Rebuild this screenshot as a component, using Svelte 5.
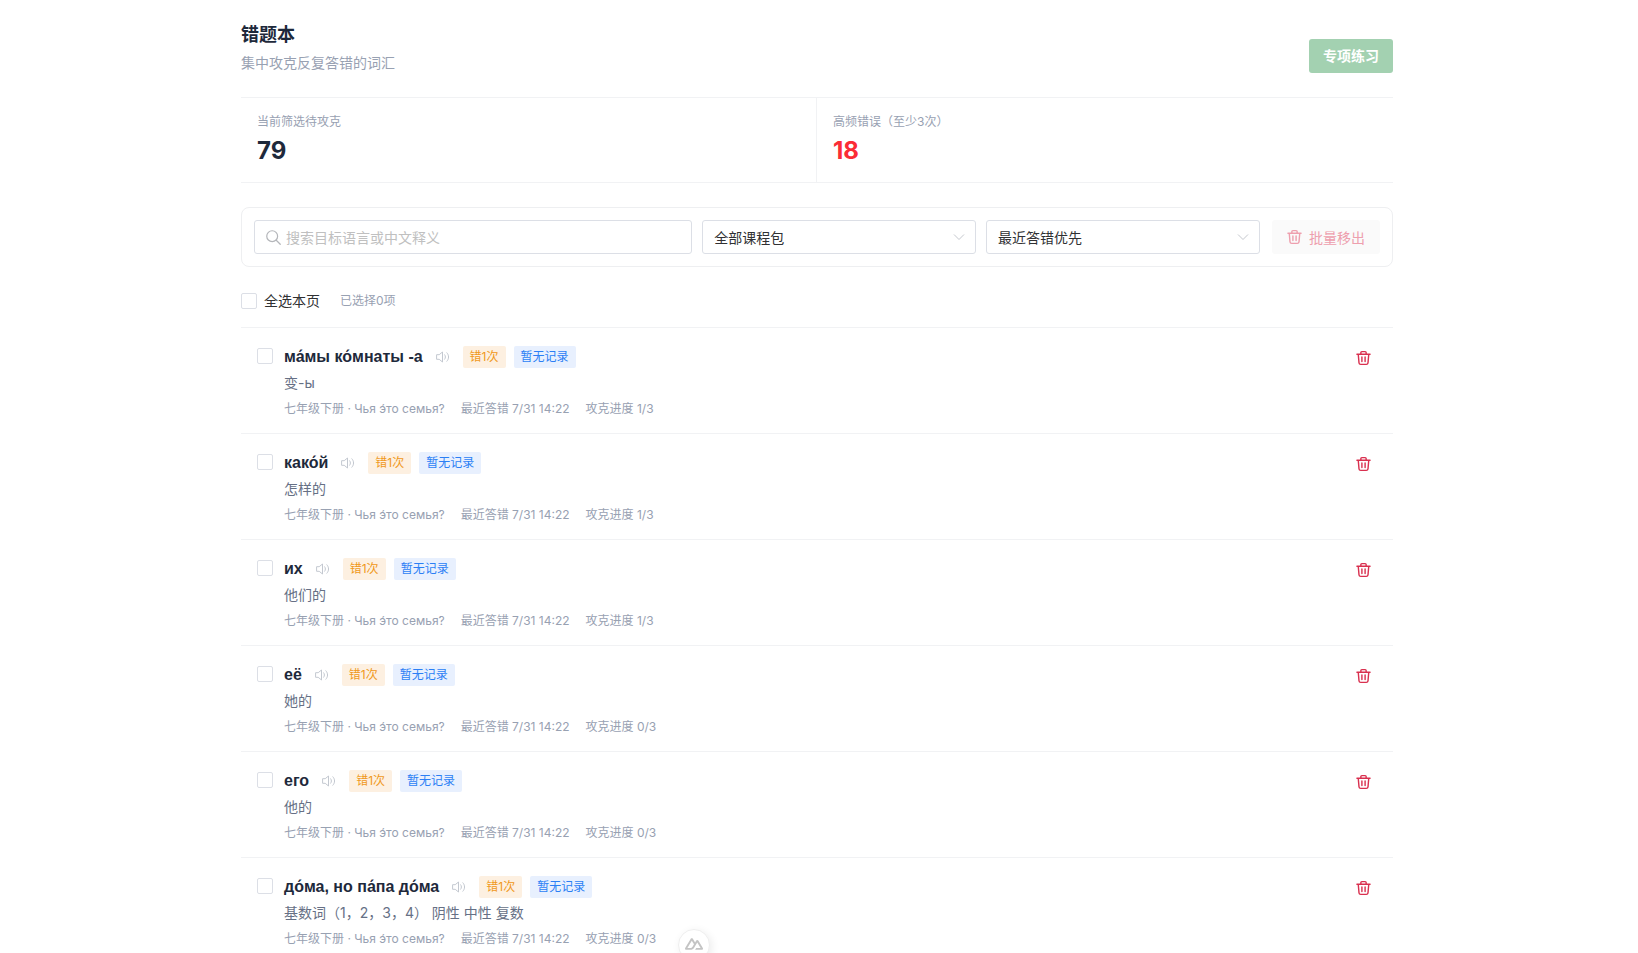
<script lang="ts">
  interface WrongWord {
    id: number;
    word: string;
    meaning: string;
    progress: number;
  }

  const words: WrongWord[] = [
    { id: 1, word: 'ма́мы ко́мнаты -а', meaning: '变-ы', progress: 1 },
    { id: 2, word: 'како́й', meaning: '怎样的', progress: 1 },
    { id: 3, word: 'их', meaning: '他们的', progress: 1 },
    { id: 4, word: 'её', meaning: '她的', progress: 0 },
    { id: 5, word: 'его', meaning: '他的', progress: 0 },
    { id: 6, word: 'до́ма, но па́па до́ма', meaning: '基数词（1，2，3，4） 阴性 中性 复数', progress: 0 }
  ];

  let keyword = $state('');
  let course = $state('all');
  let sort = $state('recent');
  let selected = $state<number[]>([]);

  let allSelected = $derived(selected.length === words.length);

  function toggleAll() {
    selected = allSelected ? [] : words.map((w) => w.id);
  }
</script>

{#snippet trash()}
  <svg class="trash" viewBox="0 0 16 16" fill="none" stroke="currentColor" stroke-width="1.5" stroke-linecap="round" stroke-linejoin="round" aria-hidden="true">
    <path d="M1 4h14M5.2 4V2.2c0-.6.4-1 1-1h3.600c.6 0 1 .4 1 1V4M2.400 4l.8 9.200c.1 1 .8 1.600 1.800 1.600h6c1 0 1.700-.6 1.800-1.600L13.600 4M6.300 7v4.800M9.700 7v4.800" />
  </svg>
{/snippet}

<div class="page">
  <main>
    <header>
      <div>
        <h1>错题本</h1>
        <p>集中攻克反复答错的词汇</p>
      </div>
      <button class="practice" disabled={selected.length === 0}>专项练习</button>
    </header>

    <section class="stats">
      <div class="stat">
        <span>当前筛选待攻克</span>
        <strong>79</strong>
      </div>
      <div class="stat">
        <span>高频错误（至少3次）</span>
        <strong class="danger">18</strong>
      </div>
    </section>

    <section class="filters">
      <label class="search">
        <svg viewBox="0 0 16 16" fill="none" stroke="currentColor" stroke-width="1.3" stroke-linecap="round" aria-hidden="true">
          <circle cx="6.6" cy="6.600" r="5.800" />
          <path d="M10.900 10.900l4.300 4.300" />
        </svg>
        <input type="text" bind:value={keyword} placeholder="搜索目标语言或中文释义" aria-label="搜索" />
      </label>
      <div class="select">
        <select bind:value={course} aria-label="课程包">
          <option value="all">全部课程包</option>
        </select>
        <svg viewBox="0 0 12 12" fill="none" stroke="currentColor" aria-hidden="true"><path d="M1 3.5l5 5 5-5" /></svg>
      </div>
      <div class="select">
        <select bind:value={sort} aria-label="排序">
          <option value="recent">最近答错优先</option>
        </select>
        <svg viewBox="0 0 12 12" fill="none" stroke="currentColor" aria-hidden="true"><path d="M1 3.5l5 5 5-5" /></svg>
      </div>
      <button class="remove" disabled={selected.length === 0}>
        {@render trash()}
        批量移出
      </button>
    </section>

    <div class="toolbar">
      <label>
        <input type="checkbox" checked={allSelected} onchange={toggleAll} />
        全选本页
      </label>
      <span>已选择{selected.length}项</span>
    </div>

    <ul>
      {#each words as item (item.id)}
        <li>
          <input type="checkbox" value={item.id} bind:group={selected} aria-label={item.word} />
          <div class="body">
            <div class="head">
              <h2>{item.word}</h2>
              <button class="sound" aria-label="播放发音">
                <svg viewBox="0 0 14 14" fill="none" stroke="currentColor" stroke-linecap="round" stroke-linejoin="round" aria-hidden="true">
                  <path d="M1 4.7h2.2L6.5 2v10L3.2 9.3H1zM8.7 4.8c1 1.3 1 3.1 0 4.4M10.9 2.8c2.3 2.4 2.3 6 0 8.4" />
                </svg>
              </button>
              <span class="tag warning">错1次</span>
              <span class="tag info">暂无记录</span>
            </div>
            <p class="meaning">{item.meaning}</p>
            <div class="meta">
              <span>七年级下册 · Чья э́то семья́?</span>
              <span>最近答错 7/31 14:22</span>
              <span>攻克进度 {item.progress}/3</span>
            </div>
          </div>
          <button class="delete" aria-label="移出">{@render trash()}</button>
        </li>
      {/each}
    </ul>
  </main>

  <button class="devtools" aria-label="Nuxt DevTools">
    <svg viewBox="0 4 24 16" fill="currentColor" aria-hidden="true">
      <path d="M13.464 19.83h8.922c.283 0 .562-.073.807-.21a1.6 1.6 0 0 0 .591-.574 1.53 1.53 0 0 0 .216-.783 1.53 1.53 0 0 0-.217-.782L17.792 7.414a1.6 1.6 0 0 0-.591-.573 1.65 1.65 0 0 0-.807-.21c-.283 0-.562.073-.807.21a1.6 1.6 0 0 0-.59.573L13.463 9.99 10.47 4.953a1.6 1.6 0 0 0-.591-.573 1.65 1.65 0 0 0-.807-.21c-.284 0-.562.073-.807.21a1.6 1.6 0 0 0-.591.573L.216 17.481a1.53 1.53 0 0 0-.217.782c0 .275.074.545.216.783a1.6 1.6 0 0 0 .59.574c.246.137.525.21.808.21h5.6c2.22 0 3.856-.946 4.982-2.79l2.733-4.593 1.464-2.457 4.395 7.382h-5.859Zm-6.341-2.46-3.908-.002 5.858-9.842 2.923 4.921-1.957 3.29c-.748 1.196-1.597 1.632-2.916 1.632Z" />
    </svg>
  </button>
</div>

<style>
  :global(body) {
    background: #fff;
    font-family: Inter, "Noto Sans CJK SC", sans-serif;
    font-size: 14px;
    color: #303133;
  }

  .page {
    box-sizing: border-box;
    height: 100vh;
    padding-right: 4px;
    overflow-y: auto;
    scrollbar-width: none;
  }

  main {
    box-sizing: border-box;
    max-width: 1200px;
    margin: 0 auto;
    padding: 20px 24px;
  }

  h1, h2, p, ul {
    margin: 0;
    padding: 0;
  }

  button, input, select {
    box-sizing: border-box;
    margin: 0;
    font: inherit;
  }

  button {
    border: none;
    padding: 0;
    background: none;
    cursor: pointer;
  }

  button:disabled {
    cursor: not-allowed;
  }

  header {
    display: flex;
    align-items: flex-end;
    justify-content: space-between;
    padding-bottom: 24px;
  }

  h1 {
    font-size: 18px;
    line-height: 30px;
    font-weight: 600;
    color: #1e293b;
  }

  header p {
    margin-top: 2px;
    line-height: 21px;
    color: #98a1b2;
  }

  .practice {
    width: 84px;
    height: 34px;
    padding-bottom: 2px;
    border-radius: 3px;
    background: #a3d1b1;
    color: #fff;
    font-weight: 600;
  }

  .stats {
    display: grid;
    grid-template-columns: 1fr 1fr;
    border-top: 1px solid #f1f2f4;
    border-bottom: 1px solid #f1f2f4;
  }

  .stat {
    display: flex;
    flex-direction: column;
    gap: 4px;
    padding: 16px;
  }

  .stat:first-child {
    border-right: 1px solid #f1f2f4;
  }

  .stat span {
    font-size: 12px;
    line-height: 16px;
    color: #98a1b2;
  }

  .stat strong {
    padding-top: 2px;
    font-size: 24px;
    line-height: 30px;
    font-weight: 700;
    font-optical-sizing: none;
    color: #1e293b;
  }

  .stat .danger {
    color: #fb2c36;
  }

  .filters {
    display: grid;
    grid-template-columns: minmax(0, 8fr) minmax(0, 5fr) minmax(0, 5fr) 110px;
    gap: 10px;
    margin-top: 24px;
    padding: 12px;
    border: 1px solid #eeeff1;
    border-radius: 8px;
  }

  .search, .select {
    box-sizing: border-box;
    height: 34px;
    border: 1px solid #dcdfe6;
    border-radius: 3px;
  }

  .search {
    display: flex;
    align-items: center;
    gap: 5px;
    padding: 0 11px;
  }

  .search svg {
    width: 15px;
    height: 15px;
    flex: none;
    color: #b4b6ba;
  }

  .search input {
    flex: 1;
    min-width: 0;
    padding: 0;
    border: none;
    outline: none;
    background: none;
    color: #303133;
  }

  .search input::placeholder {
    color: #c0c0c0;
  }

  .select {
    display: grid;
    align-items: center;
  }

  .select select, .select svg {
    grid-area: 1 / 1;
  }

  .select select {
    width: 100%;
    height: 32px;
    padding: 0 32px 0 11px;
    appearance: none;
    border: none;
    background: none;
    color: #303133;
  }

  .select svg {
    justify-self: end;
    width: 12px;
    height: 12px;
    margin-right: 10px;
    color: #c5c8ce;
    pointer-events: none;
  }

  .remove {
    display: flex;
    align-items: center;
    justify-content: center;
    gap: 7px;
    height: 34px;
    margin-left: 2px;
    padding-bottom: 1px;
    border-radius: 3px;
    background: #fafafa;
    color: #ee9fae;
  }

  .trash {
    width: 15px;
    height: 16px;
    flex: none;
  }

  .toolbar {
    display: flex;
    align-items: center;
    gap: 20px;
    margin-top: 24px;
    padding-bottom: 16px;
    line-height: 20px;
  }

  .toolbar label {
    display: flex;
    align-items: center;
    gap: 7px;
  }

  .toolbar span {
    font-size: 12px;
    color: #98a1b2;
  }

  input[type="checkbox"] {
    flex: none;
    width: 16px;
    height: 16px;
    appearance: none;
    border: 1px solid #dcdfe6;
    border-radius: 2px;
    background: #fff;
  }

  input[type="checkbox"]:checked {
    border-color: #48a566;
    background: #48a566;
  }

  ul {
    list-style: none;
  }

  li {
    display: flex;
    align-items: flex-start;
    gap: 11px;
    padding: 16px;
    border-top: 1px solid #f1f2f4;
  }

  li > input[type="checkbox"] {
    margin-top: 4px;
  }

  .body {
    flex: 1;
    min-width: 0;
  }

  .head {
    display: flex;
    align-items: center;
    gap: 8px;
    height: 26px;
  }

  h2 {
    font-family: "Liberation Sans", "Noto Sans CJK SC", sans-serif;
    font-size: 16px;
    line-height: 26px;
    font-weight: 700;
    color: #1e293b;
  }

  .sound {
    display: flex;
    align-items: center;
    justify-content: center;
    width: 24px;
    height: 24px;
    color: #c3c8d0;
  }

  .sound svg {
    width: 14px;
    height: 14px;
  }

  .tag {
    padding: 0 7px;
    border-radius: 2px;
    font-size: 12px;
    line-height: 22px;
  }

  .warning {
    background: #fdf0e1;
    color: #f0981a;
  }

  .info {
    background: #e8f0fe;
    color: #2b7ff5;
  }

  .meaning {
    margin-top: 2px;
    line-height: 22px;
    color: #667085;
  }

  .meta {
    display: flex;
    gap: 16px;
    margin-top: 7px;
    font-size: 12px;
    line-height: 16px;
    color: #98a1b2;
  }

  .delete {
    display: flex;
    align-items: center;
    justify-content: center;
    width: 28px;
    height: 28px;
    color: #d9304f;
  }

  .devtools {
    position: fixed;
    left: 678px;
    bottom: -8px;
    display: flex;
    align-items: center;
    justify-content: center;
    width: 32px;
    height: 32px;
    padding-bottom: 2px;
    border: 1px solid #eee;
    border-radius: 50%;
    background: #fff;
    box-shadow: 2px 2px 8px rgba(0, 0, 0, 0.08);
    color: #c4c4c4;
  }

  .devtools svg {
    width: 18px;
    height: 12px;
    flex: none;
  }
</style>
